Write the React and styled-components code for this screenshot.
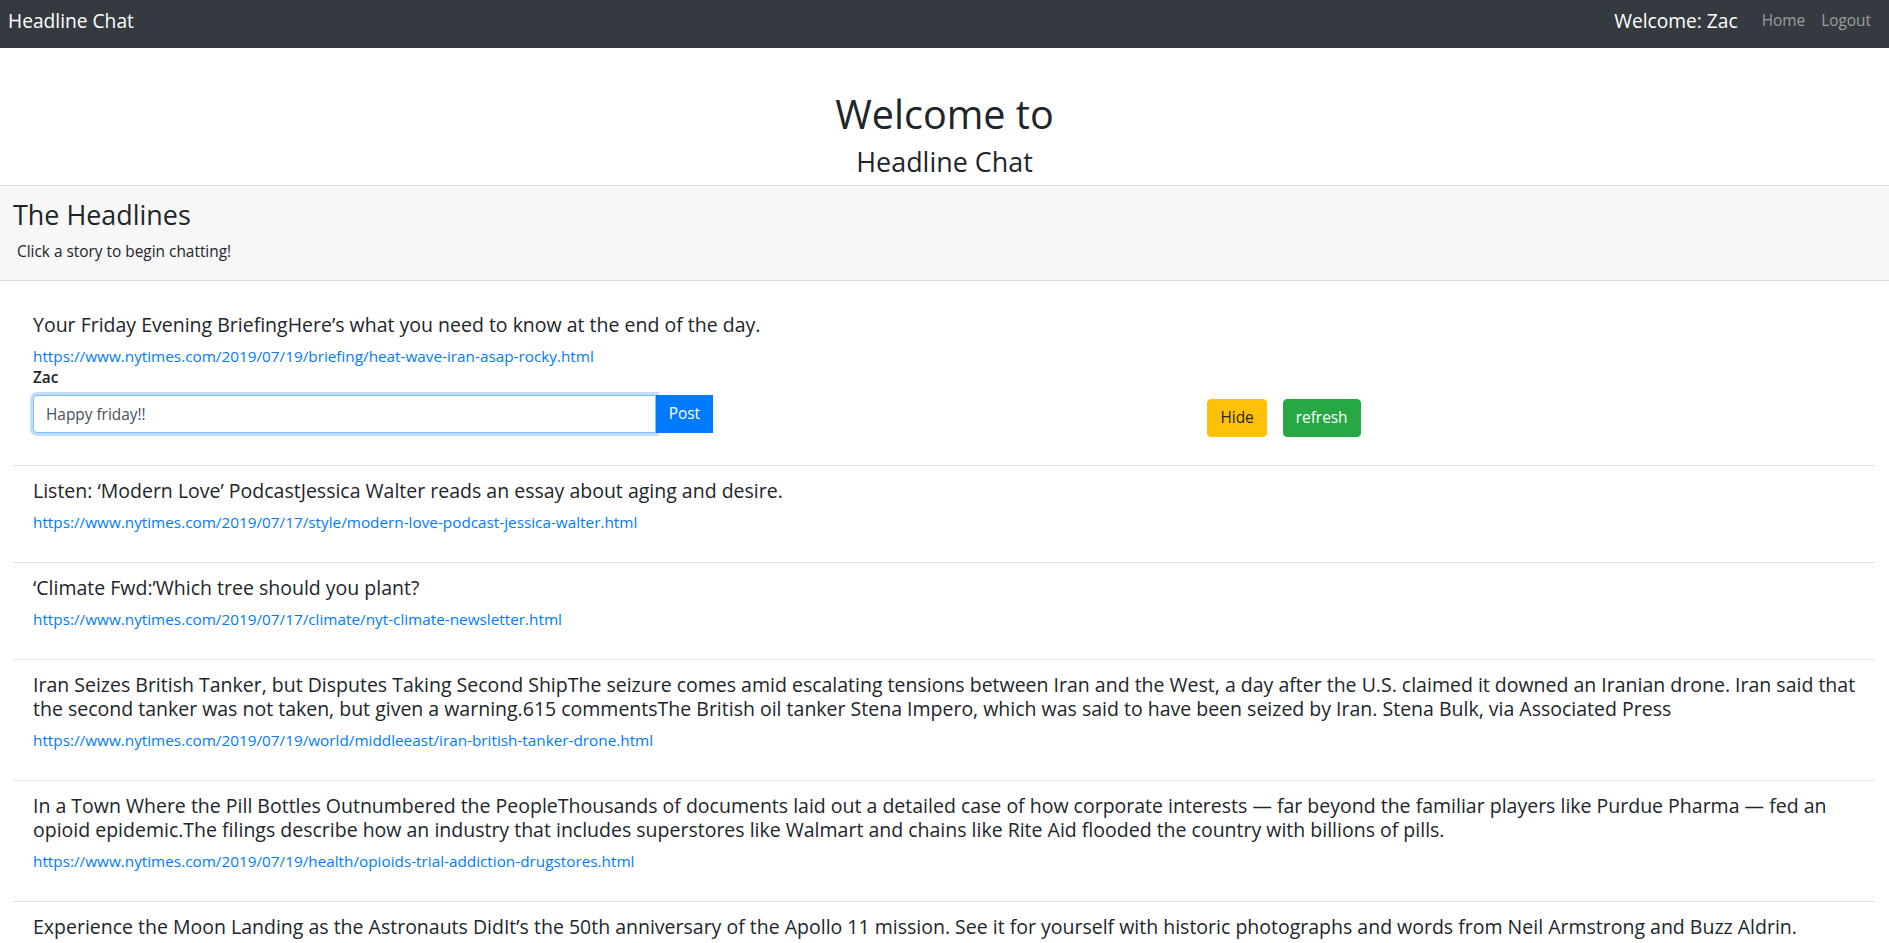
import React from 'react';
import styled, { createGlobalStyle } from 'styled-components';

const GlobalStyle = createGlobalStyle`
  * {
    box-sizing: border-box;
  }

  body {
    margin: 0;
    font-family: "Open Sans", "Noto Sans", sans-serif;
    font-size: 15.4px;
    line-height: 24px;
    color: #212529;
    background: #ffffff;
  }
`;

const Navbar = styled.nav`
  height: 48px;
  background: #343a40;
  display: flex;
  align-items: center;
  justify-content: space-between;
  padding: 0 10px 0 8px;
`;

const Brand = styled.a`
  color: #ffffff;
  font-size: 19.2px;
  line-height: 30px;
  text-decoration: none;
  margin-top: -6px;
`;

const NavRight = styled.div`
  display: flex;
  align-items: center;
  margin-top: -6px;
`;

const Greeting = styled.span`
  color: #ffffff;
  font-size: 19.2px;
  line-height: 30px;
  margin-right: 16px;
`;

const NavLink = styled.a`
  color: rgba(255, 255, 255, 0.5);
  text-decoration: none;
  padding: 0 8px;
`;

const Hero = styled.header`
  text-align: center;
  padding-top: 42px;
  border-bottom: 1px solid #dddddd;
`;

const HeroTitle = styled.h1`
  margin: 0 0 7px;
  font-size: 39.6px;
  line-height: 48px;
  font-weight: 500;
`;

const HeroSub = styled.h3`
  margin: 0;
  padding-bottom: 6px;
  font-size: 26.9px;
  line-height: 34px;
  font-weight: 500;
`;

const Band = styled.section`
  background: #f7f7f7;
  border-bottom: 1px solid #dddddd;
  padding: 12px 13px 0;
`;

const BandTitle = styled.h3`
  margin: 0 0 8px;
  font-size: 26.9px;
  line-height: 34px;
  font-weight: 500;
`;

const BandText = styled.p`
  margin: 0 0 16px;
  padding-left: 4px;
`;

const StoryList = styled.ul`
  list-style: none;
  margin: 19px 14px 0 13px;
  padding: 0;
`;

const Story = styled.li`
  padding: 13px 8px ${(p) => (p.$open ? '24px' : '28px')} 20px;
  border-bottom: 1px solid #dee2e6;
`;

const StoryTitle = styled.h5`
  margin: 0 0 7px;
  font-size: 19.5px;
  line-height: 24px;
  font-weight: 500;
`;

const StoryLink = styled.a`
  display: block;
  font-size: 15.3px;
  color: #007bff;
  text-decoration: none;
`;

const UserName = styled.div`
  font-weight: 600;
  line-height: 20px;
  margin-bottom: 7px;
`;

const ChatRow = styled.div`
  display: flex;
  align-items: center;
  height: 46px;
`;

const InputGroup = styled.form`
  display: flex;
  width: 680px;
  align-self: flex-start;
`;

const ChatInput = styled.input`
  flex: 1;
  height: 38px;
  padding: 6px 12px;
  font-family: inherit;
  font-size: 15.4px;
  color: #495057;
  background: #ffffff;
  border: 1px solid ${(p) => (p.$focused ? '#80bdff' : '#ced4da')};
  border-radius: 4px 0 0 4px;
  box-shadow: ${(p) => (p.$focused ? '0 0 0 3px rgba(0, 123, 255, 0.25)' : 'none')};
  outline: none;
`;

const Button = styled.button`
  font-family: inherit;
  font-size: 15.4px;
  line-height: 24px;
  padding: 6px 12px;
  border: 1px solid ${(p) => p.$bg};
  background: ${(p) => p.$bg};
  color: ${(p) => p.$fg};
  border-radius: ${(p) => (p.$attached ? '0' : '4px')};
  cursor: pointer;
`;

const Actions = styled.div`
  flex: 1;
  display: flex;
  justify-content: center;
  gap: 16px;
  padding-right: 12px;
`;

const stories = [
  {
    title: 'Your Friday Evening BriefingHere’s what you need to know at the end of the day.',
    url: 'https://www.nytimes.com/2019/07/19/briefing/heat-wave-iran-asap-rocky.html',
    open: true,
  },
  {
    title: 'Listen: ‘Modern Love’ PodcastJessica Walter reads an essay about aging and desire.',
    url: 'https://www.nytimes.com/2019/07/17/style/modern-love-podcast-jessica-walter.html',
  },
  {
    title: '‘Climate Fwd:’Which tree should you plant?',
    url: 'https://www.nytimes.com/2019/07/17/climate/nyt-climate-newsletter.html',
  },
  {
    title:
      'Iran Seizes British Tanker, but Disputes Taking Second ShipThe seizure comes amid escalating tensions between Iran and the West, a day after the U.S. claimed it downed an Iranian drone. Iran said that the second tanker was not taken, but given a warning.615 commentsThe British oil tanker Stena Impero, which was said to have been seized by Iran. Stena Bulk, via Associated Press',
    url: 'https://www.nytimes.com/2019/07/19/world/middleeast/iran-british-tanker-drone.html',
  },
  {
    title:
      'In a Town Where the Pill Bottles Outnumbered the PeopleThousands of documents laid out a detailed case of how corporate interests — far beyond the familiar players like Purdue Pharma — fed an opioid epidemic.The filings describe how an industry that includes superstores like Walmart and chains like Rite Aid flooded the country with billions of pills.',
    url: 'https://www.nytimes.com/2019/07/19/health/opioids-trial-addiction-drugstores.html',
  },
  {
    title:
      'Experience the Moon Landing as the Astronauts DidIt’s the 50th anniversary of the Apollo 11 mission. See it for yourself with historic photographs and words from Neil Armstrong and Buzz Aldrin.',
    url: 'https://www.nytimes.com/interactive/2019/07/19/science/apollo-11-moon-landing.html',
  },
];

function ChatBox({ user }) {
  return (
    <>
      <UserName>{user}</UserName>
      <ChatRow>
        <InputGroup onSubmit={(e) => e.preventDefault()}>
          <ChatInput $focused defaultValue="Happy friday!!" />
          <Button $bg="#007bff" $fg="#ffffff" $attached type="submit">
            Post
          </Button>
        </InputGroup>
        <Actions>
          <Button $bg="#ffc107" $fg="#212529" type="button">
            Hide
          </Button>
          <Button $bg="#28a745" $fg="#ffffff" type="button">
            refresh
          </Button>
        </Actions>
      </ChatRow>
    </>
  );
}

export default function App() {
  return (
    <>
      <GlobalStyle />
      <Navbar>
        <Brand href="#">Headline Chat</Brand>
        <NavRight>
          <Greeting>Welcome: Zac</Greeting>
          <NavLink href="#">Home</NavLink>
          <NavLink href="#">Logout</NavLink>
        </NavRight>
      </Navbar>

      <Hero>
        <HeroTitle>Welcome to</HeroTitle>
        <HeroSub>Headline Chat</HeroSub>
      </Hero>

      <Band>
        <BandTitle>The Headlines</BandTitle>
        <BandText>Click a story to begin chatting!</BandText>
      </Band>

      <StoryList>
        {stories.map((story) => (
          <Story key={story.url} $open={story.open}>
            <StoryTitle>{story.title}</StoryTitle>
            <StoryLink href={story.url}>{story.url}</StoryLink>
            {story.open && <ChatBox user="Zac" />}
          </Story>
        ))}
      </StoryList>
    </>
  );
}
